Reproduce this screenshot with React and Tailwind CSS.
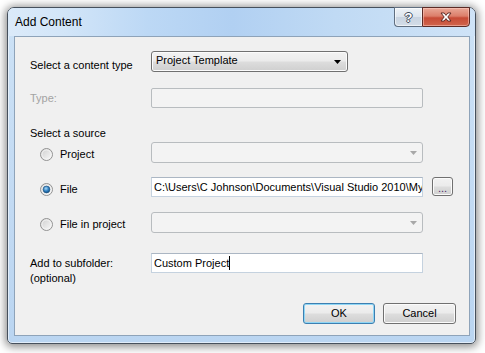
import React from 'react'

function Radio({ checked }) {
    return (
        <svg width="13" height="13" viewBox="0 0 13 13" className="shrink-0">
            <defs>
                <linearGradient id="radioFill" x1="0" y1="0" x2="1" y2="1">
                    <stop offset="0" stopColor="#cdcdcd" />
                    <stop offset="1" stopColor="#fbfbfb" />
                </linearGradient>
                <radialGradient id="radioDot" cx="0.42" cy="0.35" r="0.7">
                    <stop offset="0" stopColor="#a8d8f8" />
                    <stop offset="0.55" stopColor="#2f7fc0" />
                    <stop offset="1" stopColor="#0f4a7e" />
                </radialGradient>
            </defs>
            <circle cx="6.5" cy="6.5" r="6" fill="url(#radioFill)" stroke="#929292" />
            <circle cx="6.5" cy="6.5" r="4.6" fill="none" stroke="#f6f6f6" strokeWidth="0.8" />
            {checked && <circle cx="6.5" cy="6.5" r="3.4" fill="url(#radioDot)" stroke="#1c4f7a" strokeWidth="0.6" />}
        </svg>
    )
}

function Arrow({ color }) {
    return (
        <svg width="7" height="4" viewBox="0 0 7 4" className="shrink-0">
            <path d="M0 0 H7 L3.5 4 Z" fill={color} />
        </svg>
    )
}

function TextBox({ children, caret }) {
    return (
        <div className="w-[272px] h-[20px] bg-white border border-[#c5d2df] border-t-[#abb6c3] flex items-center pl-[2px] overflow-hidden whitespace-nowrap leading-[18px]">
            <span className="overflow-hidden">{children}</span>
            {caret && <span className="w-px h-[14px] bg-black shrink-0" />}
        </div>
    )
}

function DisabledBox() {
    return <div className="w-[272px] h-[20px] rounded-[2px] bg-[#f3f3f3] border border-[#b8bcbf]" />
}

function DisabledCombo() {
    return (
        <div className="w-[272px] h-[21px] rounded-[3px] bg-[#f3f3f3] border border-[#b8bcbf] flex items-center justify-end pr-[5px]">
            <Arrow color="#a8a8a8" />
        </div>
    )
}

function Radioline({ checked, label, children }) {
    return (
        <div className="flex items-start">
            <div className="w-[136px] flex items-start pl-[25px]">
                <div className="mt-[6px]"><Radio checked={checked} /></div>
                <span className="ml-[7px] mt-[5px] leading-[14px]">{label}</span>
            </div>
            {children}
        </div>
    )
}

function WinButton({ children, primary, className }) {
    return (
        <div className={`h-[21px] rounded-[3px] border ${primary ? 'border-[#3c7fb1] shadow-[inset_0_0_0_1px_#8fd6f5]' : 'border-[#707070] shadow-[inset_0_0_0_1px_#fbfbfb]'} bg-[linear-gradient(180deg,#f2f2f2_0%,#ebebeb_48%,#dddddd_52%,#cfcfcf_100%)] flex items-center justify-center leading-[19px] ${className}`}>
            {children}
        </div>
    )
}

export default function App() {
    return (
        <div className="w-[485px] h-[353px] bg-white overflow-hidden pl-[7px] pt-[7px] font-['Liberation_Sans',Arial,sans-serif] text-[11px] text-black">
            <div className="w-[469px] h-[337px] flex flex-col rounded-t-[7px] rounded-b-[5px] border border-[#46505c] bg-[linear-gradient(180deg,#cde2f6_0%,#c2daf3_60%,#bad5f1_100%)] shadow-[inset_0_0_0_1px_rgba(255,255,255,0.55),0_1px_8px_2px_rgba(0,0,0,0.45)]">
                {/* title bar */}
                <div className="h-[28px] flex items-start rounded-t-[6px] bg-[linear-gradient(90deg,#dbeaf9_0%,#d2e5f8_12%,#bcd8f5_30%,#b1d0f2_48%,#c0daf4_70%,#cfe3f7_100%)]">
                    <span className="pl-[7px] mt-[7px] text-[12px] leading-[15px]">Add Content</span>
                    <div className="ml-auto mr-[5px] -mt-px flex h-[20px]">
                        <div className="w-[28px] h-full rounded-bl-[4px] border border-[#5f6e80] border-r-0 bg-[linear-gradient(180deg,#eef2f7_0%,#dde5ee_48%,#c9d4e1_52%,#d3dde8_100%)] flex items-center justify-center shadow-[inset_0_0_0_1px_rgba(255,255,255,0.6)]">
                            <span className="text-white font-bold text-[13px] leading-[13px] [text-shadow:1px_0_0_#3f4c5c,-1px_0_0_#3f4c5c,0_1px_0_#3f4c5c,0_-1px_0_#3f4c5c]">?</span>
                        </div>
                        <div className="w-[48px] h-full rounded-br-[4px] border border-[#5b2a25] bg-[linear-gradient(180deg,#e9a897_0%,#dc7e6a_45%,#c74b36_55%,#d0654d_100%)] flex items-center justify-center shadow-[inset_0_0_0_1px_rgba(255,210,200,0.5)]">
                            <svg width="12" height="10" viewBox="0 0 12 10">
                                <path d="M1 1 H4.2 L6 3.4 L7.8 1 H11 L7.8 5 L11 9 H7.8 L6 6.6 L4.2 9 H1 L4.2 5 Z" fill="#ffffff" stroke="#53231d" strokeWidth="0.9" strokeLinejoin="round" />
                            </svg>
                        </div>
                    </div>
                </div>

                {/* client area */}
                <div className="ml-[6px] w-[456px] h-[300px] border border-[#8ea3b9] bg-[#f0f0f0] flex flex-col">
                    <div className="mt-[14px] flex items-start">
                        <span className="w-[136px] pl-[15px] mt-[7px] leading-[14px]">Select a content type</span>
                        <div className="w-[197px] h-[21px] rounded-[3px] border border-[#707070] bg-[linear-gradient(180deg,#f2f2f2_0%,#ebebeb_48%,#dddddd_52%,#cfcfcf_100%)] shadow-[inset_0_0_0_1px_#fbfbfb] flex items-start justify-between pl-[4px] pr-[6px]">
                            <span className="leading-[17px]">Project Template</span>
                            <div className="mt-[8px]"><Arrow color="#000000" /></div>
                        </div>
                    </div>

                    <div className="mt-[16px] flex items-start">
                        <span className="w-[136px] pl-[15px] leading-[20px] text-[#a3a3a3]">Type:</span>
                        <DisabledBox />
                    </div>

                    <span className="mt-[18px] pl-[15px] leading-[14px]">Select a source</span>

                    <div className="mt-[2px]">
                        <Radioline label="Project"><DisabledCombo /></Radioline>
                    </div>
                    <div className="mt-[14px] flex items-start">
                        <Radioline checked label="File">
                            <TextBox>C:\Users\C Johnson\Documents\Visual Studio 2010\My</TextBox>
                        </Radioline>
                        <div className="ml-[9px] w-[21px] h-[19px] rounded-[3px] border border-[#707070] bg-[linear-gradient(180deg,#f2f2f2_0%,#ebebeb_48%,#dddddd_52%,#cfcfcf_100%)] shadow-[inset_0_0_0_1px_#fbfbfb] flex items-end justify-center pb-[2px] leading-[10px] text-[#4a2a6a]">...</div>
                    </div>
                    <div className="mt-[15px]">
                        <Radioline label="File in project"><DisabledCombo /></Radioline>
                    </div>

                    <div className="mt-[20px] flex items-start">
                        <span className="w-[136px] pl-[15px] mt-[3px] leading-[15px]">Add to subfolder:<br />(optional)</span>
                        <TextBox caret>Custom Project</TextBox>
                    </div>

                    <div className="mt-[17px] flex justify-end gap-[8px] mr-[13px]">
                        <WinButton primary className="w-[72px]">OK</WinButton>
                        <WinButton className="w-[73px]">Cancel</WinButton>
                    </div>
                </div>
            </div>
        </div>
    )
}
